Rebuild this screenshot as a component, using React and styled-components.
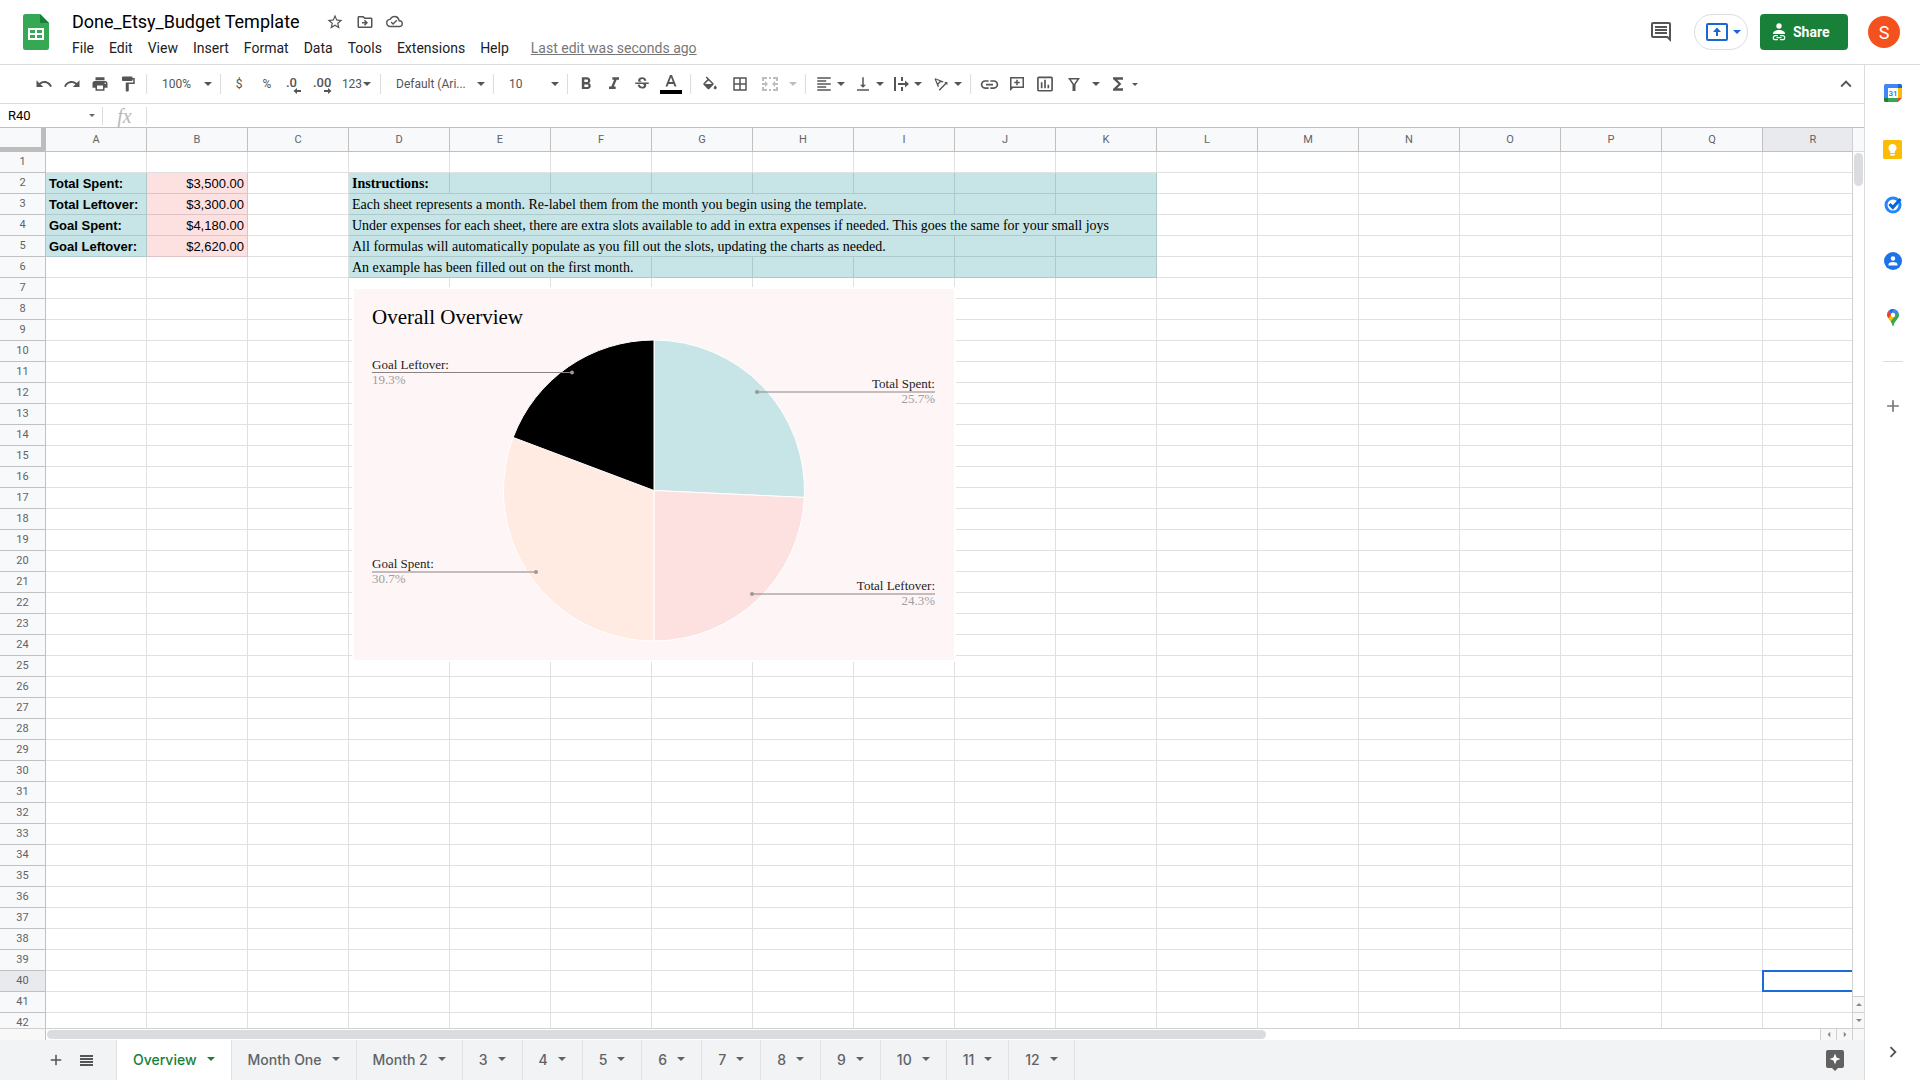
import React, { Fragment } from 'react'
import styled, { createGlobalStyle, css } from 'styled-components'
import {
  MdStarBorder, MdOutlineDriveFileMove, MdOutlineCloudDone, MdUndo, MdRedo, MdPrint, MdFormatPaint,
  MdFormatBold, MdFormatItalic, MdStrikethroughS, MdBorderAll, MdFormatAlignLeft,
  MdVerticalAlignBottom, MdTextRotationAngleup, MdLink, MdInsertChartOutlined, MdFunctions,
  MdKeyboardArrowUp, MdChevronRight, MdOutlineComment, MdAdd
} from 'react-icons/md'

const COLUMNS = 'ABCDEFGHIJKLMNOPQR'.split('')
const ROWS = Array.from({ length: 42 }, (_, i) => i + 1)
const ACTIVE = { column: 'R', row: 40 }

const TEAL = '#c7e5e6'
const PINK = '#fde1e1'
const SERIF = 'Georgia, "Liberation Serif", serif'

const totals = {
  2: ['Total Spent:', 3500],
  3: ['Total Leftover:', 3300],
  4: ['Goal Spent:', 4180],
  5: ['Goal Leftover:', 2620]
}

// span = how many columns the text runs over
const instructions = {
  2: { text: 'Instructions:', span: 1, bold: true },
  3: { text: 'Each sheet represents a month. Re-label them from the month you begin using the template.', span: 6 },
  4: { text: 'Under expenses for each sheet, there are extra slots available to add in extra expenses if needed. This goes the same for your small joys', span: 8 },
  5: { text: 'All formulas will automatically populate as you fill out the slots, updating the charts as needed.', span: 6 },
  6: { text: 'An example has been filled out on the first month.', span: 3 }
}

const menus = ['File', 'Edit', 'View', 'Insert', 'Format', 'Data', 'Tools', 'Extensions', 'Help']
const sheets = ['Overview', 'Month One', 'Month 2', '3', '4', '5', '6', '7', '8', '9', '10', '11', '12']

const money = n => n.toLocaleString('en-US', { style: 'currency', currency: 'USD' })

const Caret = ({ size = 8, color = 'currentColor' }) => (
  <svg width={size} height={size / 2} viewBox="0 0 8 4" aria-hidden="true">
    <path d="M0 0h8L4 4z" fill={color} />
  </svg>
)

const SheetsLogo = () => (
  <svg width="26" height="36" viewBox="0 0 26 36" aria-hidden="true">
    <path d="M2.500 0H17l9 9v24.500a2.500 2.500 0 0 1-2.500 2.500h-21A2.500 2.500 0 0 1 0 33.500v-31A2.500 2.500 0 0 1 2.500 0z" fill="#34a853" />
    <path d="M17 0l9 9h-9z" fill="#188038" />
    <path d="M5 14h16v12H5zM7 16v3h5v-3zM14 16v3h5v-3zM7 21v3h5v-3zM14 21v3h5v-3z" fill="#fff" fillRule="evenodd" />
  </svg>
)

const PresentIcon = () => (
  <svg width="22" height="18" viewBox="0 0 22 18" aria-hidden="true">
    <rect x="1" y="1" width="20" height="16" rx="1" fill="none" stroke="#1967d2" strokeWidth="2" />
    <path d="M11 4.500l4 4.500h-3v4h-2V9H7z" fill="#1967d2" />
  </svg>
)

const ShareIcon = () => (
  <svg width="14" height="18" viewBox="0 0 14 18" aria-hidden="true">
    <circle cx="7" cy="3" r="2.700" fill="#fff" />
    <path d="M1 11c0-3 3-4 6-4s6 1 6 4z" fill="#fff" />
    <path d="M6 12.700H3.300a2 2 0 0 0 0 4H6M8 12.700h2.700a2 2 0 0 1 0 4H8M4.500 14.700h5" fill="none" stroke="#fff" strokeWidth="1.200" />
  </svg>
)

const DecimalIcon = ({ label, right }) => (
  <svg width="20" height="20" viewBox="0 0 20 20" aria-hidden="true">
    <text x={right ? 0 : 1} y="13" fontFamily="Roboto, sans-serif" fontSize="13" fontWeight="500" fill="#555">{label}</text>
    {right
      ? <path d="M11 16h4v-2l3.500 3-3.500 3v-2h-4z" fill="#555" />
      : <path d="M16 16h-4v-2l-3.500 3 3.500 3v-2h4z" fill="#555" />}
  </svg>
)

const TextColorIcon = () => (
  <svg width="22" height="22" viewBox="0 0 22 22" aria-hidden="true">
    <path d="M10 2L5.500 13.500h2l1-2.500h5l1 2.500h2L12 2zm-.800 7L11 4.200 12.800 9z" fill="#555" />
    <path d="M0 17h22v4H0z" fill="#000" />
  </svg>
)

const FillIcon = () => (
  <svg width="18" height="18" viewBox="0 -2 24 24" aria-hidden="true">
    <path d="M16.560 8.940L7.620 0 6.210 1.410l2.380 2.380-5.150 5.150c-.590.590-.590 1.540 0 2.120l5.500 5.500c.290.290.680.440 1.060.440s.770-.150 1.060-.440l5.500-5.500c.590-.580.590-1.530 0-2.120zM5.210 10L10 5.210 14.790 10H5.210zM19 11.500s-2 2.170-2 3.500c0 1.100.900 2 2 2s2-.900 2-2c0-1.330-2-3.500-2-3.500z" fill="#555" />
  </svg>
)

const MergeIcon = () => (
  <svg width="16" height="14" viewBox="0 0 16 14" aria-hidden="true">
    <path d="M1 4V1h4M11 1h4v3M15 10v3h-4M5 13H1v-3M7 1h2M7 13h2" fill="none" stroke="#bdbdbd" strokeWidth="2" />
    <path d="M0 6h3V4l3 3-3 3V8H0zM16 6h-3V4l-3 3 3 3V8h3z" fill="#bdbdbd" />
  </svg>
)

const WrapIcon = () => (
  <svg width="16" height="14" viewBox="0 0 16 14" aria-hidden="true">
    <path d="M1 0v14M8 0v4M8 10v4M4 7h8" fill="none" stroke="#555" strokeWidth="2" />
    <path d="M11 3.500L15 7l-4 3.500z" fill="#555" />
  </svg>
)

const AddCommentIcon = () => (
  <svg width="14" height="14" viewBox="0 0 14 14" aria-hidden="true">
    <path d="M0 0h14v11H3l-3 3zM1.500 1.500v8h11v-8z" fill="#555" fillRule="evenodd" />
    <path d="M7 2.800v5.400M4.300 5.500h5.400" stroke="#555" strokeWidth="1.500" />
  </svg>
)

const FilterIcon = () => (
  <svg width="12" height="13" viewBox="0 0 12 13" aria-hidden="true">
    <path d="M0 0h12L7.500 6.500V13h-3V6.500zM2.900 1.500L6 6l3.100-4.500z" fill="#555" fillRule="evenodd" />
  </svg>
)

const ListIcon = () => (
  <svg width="13" height="11" viewBox="0 0 13 11" aria-hidden="true">
    <path d="M0 1h13M0 4h13M0 7h13M0 10h13" stroke="#555" strokeWidth="2" />
  </svg>
)

const ExploreIcon = () => (
  <svg width="18" height="21" viewBox="0 0 18 21" aria-hidden="true">
    <path d="M2 0h14a2 2 0 0 1 2 2v14a2 2 0 0 1-2 2h-4l-3 3-3-3H2a2 2 0 0 1-2-2V2a2 2 0 0 1 2-2z" fill="#616161" />
    <path d="M9 3.500l1.500 4L14.500 9l-4 1.500L9 14.500l-1.500-4L3.500 9l4-1.500z" fill="#fff" />
  </svg>
)

const CalendarIcon = () => (
  <svg width="18" height="18" viewBox="0 0 18 18" aria-hidden="true">
    <path d="M0 1.500A1.500 1.500 0 0 1 1.500 0H14v4H4v10H0z" fill="#4285f4" />
    <path d="M14 0h2.500A1.500 1.500 0 0 1 18 1.500V4h-4z" fill="#1967d2" />
    <path d="M14 4h4v10h-4z" fill="#fbbc04" />
    <path d="M4 14h10v4H4z" fill="#34a853" />
    <path d="M0 14h4v4H1.500A1.500 1.500 0 0 1 0 16.500z" fill="#188038" />
    <path d="M14 14h4l-4 4z" fill="#ea4335" />
    <path d="M4 4h10v10H4z" fill="#fff" />
    <text x="9" y="12" textAnchor="middle" fontFamily="Roboto, sans-serif" fontSize="8" fontWeight="500" fill="#1a73e8">31</text>
  </svg>
)

const KeepIcon = () => (
  <svg width="19" height="19" viewBox="0 0 19 19" aria-hidden="true">
    <rect width="19" height="19" rx="1.500" fill="#fbbc04" />
    <path d="M9.500 4a4 4 0 0 1 2.300 7.300V13H7.200v-1.700A4 4 0 0 1 9.500 4zM7.200 14h4.600v1.500H7.200z" fill="#fff" />
  </svg>
)

const TasksIcon = () => (
  <svg width="18" height="18" viewBox="0 0 18 18" aria-hidden="true">
    <circle cx="9" cy="9" r="7" fill="none" stroke="#2684fc" strokeWidth="3" />
    <path d="M5.500 8l3.300 3.500L16.500 3" fill="none" stroke="#0066da" strokeWidth="3" />
  </svg>
)

const ContactsIcon = () => (
  <svg width="18" height="18" viewBox="0 0 18 18" aria-hidden="true">
    <circle cx="9" cy="9" r="9" fill="#1a73e8" />
    <circle cx="9" cy="6.500" r="2.200" fill="#fff" />
    <path d="M4.500 13.500v-1C4.500 10.700 7 10 9 10s4.500.700 4.500 2.500v1z" fill="#fff" />
  </svg>
)

const MapsIcon = () => (
  <svg width="12" height="17" viewBox="0 0 12 17" aria-hidden="true">
    <path d="M12 6c0 4-4.500 5.500-5.500 11h-1C5.200 14 3.500 12 2 10l8.800-7.500C11.600 3.500 12 4.700 12 6z" fill="#34a853" />
    <path d="M2 10C.800 8.500 0 7.500 0 6l4-2 4 3.500-4.300 4.700z" fill="#fbbc04" />
    <path d="M0 6c0-1.500.500-2.900 1.400-3.900L5 5 1.500 9.200C.500 8 0 7 0 6z" fill="#ea4335" />
    <path d="M1.400 2.100A6 6 0 0 1 8 .300L4.500 4.800z" fill="#1a73e8" />
    <path d="M8 .300a6 6 0 0 1 3.300 3L7.500 7 4.500 4.500z" fill="#4285f4" />
    <circle cx="6" cy="6" r="2.200" fill="#fff" />
  </svg>
)

/* Pie chart */

const slices = [
  { value: 3500, color: TEAL },
  { value: 3300, color: PINK },
  { value: 4180, color: '#ffebe1' },
  { value: 2620, color: '#000' }
]

const callouts = [
  { label: 'Goal Leftover:', pct: '19.3%', side: 'start', x: 218, y: 83.5 },
  { label: 'Goal Spent:', pct: '30.7%', side: 'start', x: 182, y: 283 },
  { label: 'Total Spent:', pct: '25.7%', side: 'end', x: 403, y: 103 },
  { label: 'Total Leftover:', pct: '24.3%', side: 'end', x: 398, y: 305 }
]

const piePaths = (cx, cy, r) => {
  const sum = slices.reduce((acc, s) => acc + s.value, 0)
  const point = a => `${cx + r * Math.sin(a)} ${cy - r * Math.cos(a)}`
  let angle = 0
  return slices.map(s => {
    const from = angle
    angle += (s.value / sum) * Math.PI * 2
    return { ...s, d: `M${cx} ${cy}L${point(from)}A${r} ${r} 0 0 1 ${point(angle)}Z` }
  })
}

const PieChart = () => (
  <Chart width="600" height="371" viewBox="0 0 600 371" role="img" aria-label="Overall Overview">
    <ChartTitle x="18" y="35">Overall Overview</ChartTitle>
    {piePaths(300, 201.5, 150.5).map(s => (
      <path key={s.color} d={s.d} fill={s.color} stroke="#fff" strokeWidth="1" />
    ))}
    {callouts.map(c => {
      const edge = c.side === 'start' ? 18 : 581
      return (
        <Fragment key={c.label}>
          <path d={`M${edge} ${c.y}H${c.x}`} stroke="#8a8282" strokeWidth="1" />
          <circle cx={c.x} cy={c.y} r="2" fill="#9e9595" />
          <ChartLabel x={edge} y={c.y - 4} textAnchor={c.side}>{c.label}</ChartLabel>
          <ChartLabel x={edge} y={c.y + 11} textAnchor={c.side} $muted>{c.pct}</ChartLabel>
        </Fragment>
      )
    })}
  </Chart>
)

/* Grid */

const Row = ({ n }) => {
  const cells = []
  let i = 0
  while (i < COLUMNS.length) {
    const col = COLUMNS[i]
    let span = 1
    if (col === 'A' && totals[n]) {
      cells.push(<Cell key={col} $bg={TEAL} $bold>{totals[n][0]}</Cell>)
    } else if (col === 'B' && totals[n]) {
      cells.push(<Cell key={col} $bg={PINK} $right>{money(totals[n][1])}</Cell>)
    } else if (col === 'D' && instructions[n]) {
      const { text, bold } = instructions[n]
      span = instructions[n].span
      cells.push(<Cell key={col} colSpan={span} $bg={TEAL} $bold={bold} $serif>{text}</Cell>)
    } else {
      const filled = instructions[n] && i > 3 && i < 11
      cells.push(<Cell key={col} $bg={filled ? TEAL : undefined} $active={n === ACTIVE.row && col === ACTIVE.column} />)
    }
    i += span
  }
  return (
    <tr>
      <RowHead scope="row" $on={n === ACTIVE.row}>{n}</RowHead>
      {cells}
    </tr>
  )
}

const Grid = () => (
  <GridArea>
    <Viewport>
      <Table>
        <colgroup>
          <HeadCol />
          {COLUMNS.map(c => <DataCol key={c} />)}
        </colgroup>
        <thead>
          <tr>
            <Corner />
            {COLUMNS.map(c => <ColHead key={c} scope="col" $on={c === ACTIVE.column}>{c}</ColHead>)}
          </tr>
        </thead>
        <tbody>
          {ROWS.map(n => <Row key={n} n={n} />)}
        </tbody>
      </Table>
      <PieChart />
    </Viewport>
    <VScroll>
      <VScrollHead />
      <VThumb />
      <ScrollButton aria-label="Scroll up"><Arrow $turn={180}><Caret size={6} color="#888" /></Arrow></ScrollButton>
      <ScrollButton aria-label="Scroll down"><Caret size={6} color="#888" /></ScrollButton>
    </VScroll>
  </GridArea>
)

const Toolbar = () => (
  <Tools>
    <Tool aria-label="Undo"><MdUndo size={18} /></Tool>
    <Tool aria-label="Redo"><MdRedo size={18} /></Tool>
    <Tool aria-label="Print"><MdPrint size={18} /></Tool>
    <Tool aria-label="Paint format"><MdFormatPaint size={18} /></Tool>
    <Sep />
    <Picker $w={65}>
      <select aria-label="Zoom"><option>100%</option></select>
      <Caret />
    </Picker>
    <Sep />
    <Tool aria-label="Format as currency">$</Tool>
    <Tool aria-label="Format as percent">%</Tool>
    <Tool aria-label="Decrease decimal places"><DecimalIcon label=".0" /></Tool>
    <Tool aria-label="Increase decimal places"><DecimalIcon label=".00" right /></Tool>
    <Tool aria-label="More formats" $w={39} $gap={1}>123<Caret /></Tool>
    <Sep />
    <Picker $w={104}>
      <select aria-label="Font"><option>Default (Ari...</option></select>
      <Caret />
    </Picker>
    <Sep />
    <Picker $w={65}>
      <select aria-label="Font size"><option>10</option></select>
      <Caret />
    </Picker>
    <Sep />
    <Tool aria-label="Bold"><MdFormatBold size={20} /></Tool>
    <Tool aria-label="Italic"><MdFormatItalic size={20} /></Tool>
    <Tool aria-label="Strikethrough"><MdStrikethroughS size={18} /></Tool>
    <Tool aria-label="Text color" $w={30}><TextColorIcon /></Tool>
    <Sep />
    <Tool aria-label="Fill color" $w={30}><FillIcon /></Tool>
    <Tool aria-label="Borders" $w={30}><MdBorderAll size={18} /></Tool>
    <Tool aria-label="Merge cells" $w={30}><MergeIcon /></Tool>
    <Tool aria-label="Merge type" $w={16} $off><Caret /></Tool>
    <Sep />
    <Tool aria-label="Horizontal align" $w={39}><MdFormatAlignLeft size={18} /><Caret /></Tool>
    <Tool aria-label="Vertical align" $w={39}><MdVerticalAlignBottom size={18} /><Caret /></Tool>
    <Tool aria-label="Text wrapping" $w={39}><WrapIcon /><Caret /></Tool>
    <Tool aria-label="Text rotation" $w={39}><MdTextRotationAngleup size={18} /><Caret /></Tool>
    <Sep />
    <Tool aria-label="Insert link"><MdLink size={21} /></Tool>
    <Tool aria-label="Insert comment"><AddCommentIcon /></Tool>
    <Tool aria-label="Insert chart"><MdInsertChartOutlined size={20} /></Tool>
    <Tool aria-label="Create a filter" $w={30}><FilterIcon /></Tool>
    <Tool aria-label="Filter views" $w={14}><Caret /></Tool>
    <Tool aria-label="Functions" $w={40}><MdFunctions size={20} /><Caret size={6} /></Tool>
    <Spacer />
    <Tool aria-label="Hide the menus"><MdKeyboardArrowUp size={22} /></Tool>
  </Tools>
)

export default () => (
  <Page>
    <GlobalStyle />
    <Header>
      <SheetsLogo />
      <Heading>
        <TitleLine>
          <Title>Done_Etsy_Budget Template</Title>
          <Tool aria-label="Star" $w={30}><MdStarBorder size={18} /></Tool>
          <Tool aria-label="Move" $w={30}><MdOutlineDriveFileMove size={18} /></Tool>
          <Tool aria-label="See document status" $w={30}><MdOutlineCloudDone size={17} /></Tool>
        </TitleLine>
        <MenuBar>
          {menus.map(m => <Menu key={m}>{m}</Menu>)}
          <LastEdit href="#history">Last edit was seconds ago</LastEdit>
        </MenuBar>
      </Heading>
      <Comments aria-label="Open comment history"><MdOutlineComment size={24} /></Comments>
      <Present aria-label="Present"><PresentIcon /><Caret color="#1967d2" /></Present>
      <Share><ShareIcon />Share</Share>
      <Avatar aria-label="Account">S</Avatar>
    </Header>
    <Body>
      <Main>
        <Toolbar />
        <FormulaBar>
          <NameBox>
            <input aria-label="Name box" defaultValue="R40" />
            <Caret size={6} color="#666" />
          </NameBox>
          <Fx>fx</Fx>
          <Formula aria-label="Formula" />
        </FormulaBar>
        <Grid />
        <HScroll>
          <HScrollHead />
          <HTrack><HThumb /></HTrack>
          <ScrollButton $side aria-label="Scroll left"><Arrow $turn={90}><Caret size={6} color="#888" /></Arrow></ScrollButton>
          <ScrollButton $side aria-label="Scroll right"><Arrow $turn={-90}><Caret size={6} color="#888" /></Arrow></ScrollButton>
          <ScrollCorner />
        </HScroll>
        <SheetBar>
          <SheetTool aria-label="Add sheet"><MdAdd size={18} /></SheetTool>
          <SheetTool aria-label="All sheets"><ListIcon /></SheetTool>
          <Tabs>
            {sheets.map((s, i) => <Tab key={s} $on={i === 0}>{s}<Caret /></Tab>)}
          </Tabs>
          <Spacer />
          <Explore aria-label="Explore"><ExploreIcon /></Explore>
        </SheetBar>
      </Main>
      <Side>
        <SideButton aria-label="Calendar"><CalendarIcon /></SideButton>
        <SideButton aria-label="Keep"><KeepIcon /></SideButton>
        <SideButton aria-label="Tasks"><TasksIcon /></SideButton>
        <SideButton aria-label="Contacts"><ContactsIcon /></SideButton>
        <SideButton aria-label="Maps"><MapsIcon /></SideButton>
        <SideRule />
        <SideButton aria-label="Get add-ons"><MdAdd size={20} color="#777" /></SideButton>
        <Spacer />
        <SideButton aria-label="Hide side panel"><MdChevronRight size={22} /></SideButton>
      </Side>
    </Body>
  </Page>
)

const GlobalStyle = createGlobalStyle`
  * {
    box-sizing: border-box;
  }
  body {
    margin: 0;
    font-family: Roboto, sans-serif;
    color: #202124;
    background: #fff;
  }
  button, input, select {
    margin: 0;
    padding: 0;
    border: 0;
    outline: 0;
    background: none;
    font-family: inherit;
    color: inherit;
  }
  svg {
    flex: none;
  }
`
const Page = styled.div`
  display: flex;
  flex-direction: column;
  height: 100vh;
  overflow: hidden;
`
const Header = styled.header`
  display: flex;
  align-items: center;
  height: 65px;
  padding: 0 20px 0 23px;
  border-bottom: 1px solid #dadce0;
`
const Heading = styled.div`
  flex: 1;
  padding: 5px 0 0 16px;
`
const TitleLine = styled.div`
  display: flex;
  align-items: center;
  height: 26px;
  padding-bottom: 2px;
`
const Title = styled.h1`
  margin: 0 20px 0 7px;
  font-size: 18px;
  font-weight: 400;
  line-height: 24px;
  color: #000;
`
const MenuBar = styled.nav`
  display: flex;
  align-items: center;
  gap: 1px;
  height: 24px;
`
const Menu = styled.button`
  padding: 0 7px;
  font-size: 14px;
  line-height: 24px;
  color: #202124;
`
const LastEdit = styled.a`
  margin-left: 14px;
  font-size: 14px;
  line-height: 24px;
  color: #777;
`
const Comments = styled.button`
  display: flex;
  margin-right: 21px;
  color: #555;
`
const Present = styled.button`
  display: flex;
  justify-content: center;
  align-items: center;
  gap: 5px;
  width: 54px;
  height: 36px;
  margin-right: 12px;
  padding-left: 4px;
  border: 1px solid #dadce0;
  border-radius: 18px;
`
const Share = styled.button`
  display: flex;
  align-items: center;
  gap: 7px;
  width: 88px;
  height: 36px;
  margin-right: 20px;
  padding-left: 12px;
  border-radius: 4px;
  background: #188038;
  font-size: 14px;
  font-weight: 700;
  color: #fff;
`
const Avatar = styled.button`
  width: 32px;
  height: 32px;
  border-radius: 16px;
  background: #f4511e;
  font-size: 18px;
  color: #fff;
`
const Body = styled.div`
  display: flex;
  flex: 1;
  min-height: 0;
`
const Main = styled.main`
  display: flex;
  flex-direction: column;
  flex: 1;
  min-width: 0;
`
const Tools = styled.div`
  display: flex;
  align-items: center;
  height: 39px;
  padding: 0 4px 0 30px;
  border-bottom: 1px solid #dadce0;
`
const Tool = styled.button`
  display: flex;
  justify-content: center;
  align-items: center;
  gap: ${props => props.$gap || 4}px;
  width: ${props => props.$w || 28}px;
  height: 26px;
  font-size: 12px;
  color: ${props => props.$off ? '#bdbdbd' : '#555'};
`
const Sep = styled.span`
  width: 1px;
  height: 20px;
  margin: 0 4px;
  background: #dadce0;
`
const Picker = styled.label`
  display: flex;
  align-items: center;
  width: ${props => props.$w}px;
  padding: 0 4px 0 11px;
  color: #555;

  select {
    flex: 1;
    min-width: 0;
    appearance: none;
    font-size: 12px;
    line-height: 20px;
  }
`
const Spacer = styled.span`
  flex: 1;
`
const FormulaBar = styled.div`
  display: flex;
  align-items: center;
  height: 24px;
  border-bottom: 1px solid #c0c0c0;
`
const NameBox = styled.label`
  display: flex;
  align-items: center;
  width: 103px;
  height: 18px;
  padding: 0 7px 0 8px;
  border-right: 1px solid #dadce0;

  input {
    flex: 1;
    min-width: 0;
    font-size: 13px;
    color: #000;
  }
`
const Fx = styled.span`
  width: 44px;
  border-right: 1px solid #dadce0;
  font-family: "Liberation Serif", serif;
  font-size: 20px;
  font-style: italic;
  line-height: 18px;
  text-align: center;
  color: #b8b8b8;
`
const Formula = styled.input`
  flex: 1;
  padding: 0 6px;
  font-size: 13px;
`
const GridArea = styled.div`
  display: flex;
  flex: 1;
  min-height: 0;
`
const Viewport = styled.div`
  position: relative;
  flex: 1;
  min-width: 0;
  overflow: hidden;
`
const Table = styled.table`
  width: 0;
  table-layout: fixed;
  border-collapse: separate;
  border-spacing: 0;
`
const HeadCol = styled.col`
  width: 46px;
`
const DataCol = styled.col`
  width: 101px;
`
const headCell = css`
  padding: 0;
  border-right: 1px solid #c0c0c0;
  border-bottom: 1px solid #c0c0c0;
  background: ${props => props.$on ? '#e8eaed' : '#f8f9fa'};
  font-size: 11px;
  font-weight: 400;
  line-height: 14px;
  color: #5f6368;
`
const ColHead = styled.th`
  ${headCell}
  height: 24px;
`
const RowHead = styled.th`
  ${headCell}
  height: 21px;
`
const Corner = styled.td`
  height: 24px;
  border-right: 5px solid #bdbdbd;
  border-bottom: 5px solid #bdbdbd;
  background: #f8f9fa;
`
const Cell = styled.td`
  position: relative;
  height: 21px;
  padding: 0 3px;
  border-right: 1px solid rgba(0, 0, 0, 0.12);
  border-bottom: 1px solid rgba(0, 0, 0, 0.12);
  background: ${props => props.$bg || '#fff'};
  font-family: ${props => props.$serif ? SERIF : '"Liberation Sans", Arial, sans-serif'};
  font-size: ${props => props.$serif ? 14 : 13}px;
  font-weight: ${props => props.$bold ? 700 : 400};
  line-height: 18px;
  text-align: ${props => props.$right ? 'right' : 'left'};
  vertical-align: bottom;
  white-space: nowrap;
  color: #000;

  ${props => props.$active && css`
    &::after {
      content: '';
      position: absolute;
      inset: -1px;
      border: 2px solid #1a6dd8;
    }
  `}
`
const Chart = styled.svg`
  position: absolute;
  top: 161px;
  left: 354px;
  background: #fef6f6;
  box-shadow: 0 0 0 2px #fff;
`
const ChartTitle = styled.text`
  font-family: ${SERIF};
  font-size: 21px;
`
const ChartLabel = styled.text`
  font-family: ${SERIF};
  font-size: 13px;
  fill: ${props => props.$muted ? '#9e9e9e' : '#222'};
`
const VScroll = styled.div`
  display: flex;
  flex-direction: column;
  width: 12px;
  border-left: 1px solid #d0d0d0;
`
const VScrollHead = styled.div`
  height: 24px;
  border-bottom: 1px solid #dadce0;
  background: #f8f9fa;
`
const VThumb = styled.div`
  width: 9px;
  height: 33px;
  margin: 1px 1px auto;
  border-radius: 5px;
  background: #dadce0;
`
const ScrollButton = styled.button`
  display: flex;
  justify-content: center;
  align-items: center;
  width: ${props => props.$side ? '16px' : '100%'};
  height: ${props => props.$side ? '100%' : '16px'};
  border-top: ${props => props.$side ? 0 : 1}px solid #d0d0d0;
  border-left: ${props => props.$side ? 1 : 0}px solid #d0d0d0;
  background: #f8f8f8;
`
const Arrow = styled.span`
  display: flex;
  transform: rotate(${props => props.$turn}deg);
`
const HScroll = styled.div`
  display: flex;
  height: 12px;
  border-top: 1px solid #d0d0d0;
`
const HScrollHead = styled.div`
  width: 46px;
  border-right: 1px solid #c0c0c0;
  background: #f8f8f8;
`
const HTrack = styled.div`
  flex: 1;
  padding: 1px 6px 1px 1px;
`
const HThumb = styled.div`
  width: 69%;
  height: 9px;
  border-radius: 5px;
  background: #dadce0;
`
const ScrollCorner = styled.div`
  width: 12px;
  border-left: 1px solid #d0d0d0;
  background: #f8f8f8;
`
const SheetBar = styled.div`
  display: flex;
  align-items: center;
  height: 40px;
  padding: 0 20px 0 40px;
  background: #f1f3f4;
`
const SheetTool = styled.button`
  display: flex;
  justify-content: center;
  align-items: center;
  width: 31px;
  height: 40px;
  color: #555;
`
const Tabs = styled.div`
  display: flex;
  margin-left: 14px;
  border-left: 1px solid #dfe1e3;
`
const Tab = styled.button`
  display: flex;
  align-items: center;
  gap: 10px;
  height: 40px;
  padding: 0 16px 2px;
  border-right: 1px solid #e0e2e4;
  background: ${props => props.$on ? '#fff' : 'none'};
  font-family: Inter, Roboto, sans-serif;
  font-size: 14px;
  font-weight: 500;
  color: ${props => props.$on ? '#188038' : '#5f6368'};
`
const Explore = styled.button`
  display: flex;
`
const Side = styled.aside`
  display: flex;
  flex-direction: column;
  align-items: center;
  width: 56px;
  border-left: 1px solid #dadce0;
`
const SideButton = styled.button`
  display: flex;
  justify-content: center;
  align-items: center;
  width: 55px;
  height: 56px;
  color: #555;
`
const SideRule = styled.hr`
  width: 20px;
  height: 1px;
  margin: 16px 0;
  border: 0;
  background: #dadce0;
`
